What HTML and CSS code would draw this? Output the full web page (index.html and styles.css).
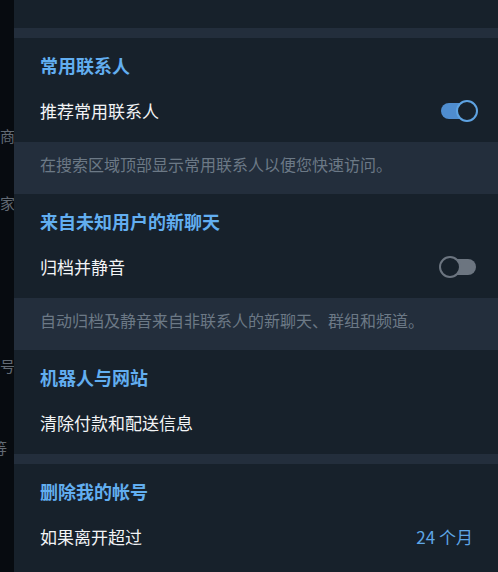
FILE: index.html
```html
<!DOCTYPE html>
<html lang="zh-CN">
<head>
<meta charset="utf-8">
<title>隐私设置</title>
<link rel="stylesheet" href="styles.css">
</head>
<body>
<div class="app">
  <div class="side">
    <div class="side-item s1"><span>协商</span></div>
    <div class="side-item s2"><span>大家</span></div>
    <div class="side-item s3"><span>帐号</span></div>
    <div class="side-item s4"><span>等等</span></div>
  </div>
  <main class="panel">
    <div class="top"></div>
    <div class="sep"></div>

    <section class="section">
      <div class="title">常用联系人</div>
      <div class="row">
        <span class="label">推荐常用联系人</span>
        <span class="toggle on"></span>
      </div>
    </section>
    <div class="info">在搜索区域顶部显示常用联系人以便您快速访问。</div>

    <section class="section">
      <div class="title">来自未知用户的新聊天</div>
      <div class="row">
        <span class="label">归档并静音</span>
        <span class="toggle off"></span>
      </div>
    </section>
    <div class="info">自动归档及静音来自非联系人的新聊天、群组和频道。</div>

    <section class="section">
      <div class="title">机器人与网站</div>
      <div class="row">
        <span class="label">清除付款和配送信息</span>
      </div>
    </section>
    <div class="sep"></div>

    <section class="section">
      <div class="title">删除我的帐号</div>
      <div class="row">
        <span class="label">如果离开超过</span>
        <span class="value">24 个月</span>
      </div>
    </section>
  </main>
</div>
</body>
</html>
```

FILE: styles.css
```css
html, body {
  margin: 0;
  padding: 0;
  height: 100%;
  background: #070b10;
  overflow: hidden;
}

body {
  font-family: "Noto Sans CJK SC", "Noto Sans", sans-serif;
  -webkit-font-smoothing: antialiased;
}

.app {
  display: flex;
  height: 572px;
}

.side {
  width: 14px;
  flex: 0 0 14px;
  overflow: hidden;
  background: #070b10;
  color: #626a74;
  font-size: 15px;
  line-height: 20px;
}

.side-item {
  display: flex;
  justify-content: flex-end;
  white-space: nowrap;
  height: 20px;
}

.side-item span {
  margin-right: -1px;
}

.s1 { margin-top: 126px; }
.s2 { margin-top: 47px; }
.s3 { margin-top: 143px; }
.s4 { margin-top: 62px; margin-right: 8px; }

.panel {
  flex: 1;
  background: #17212b;
  min-width: 0;
}

.top {
  height: 28px;
}

.sep {
  height: 10px;
  background: #232e3c;
}

.section {
  padding: 15px 20px 8px 26px;
}

.title {
  height: 24px;
  line-height: 24px;
  font-size: 18px;
  font-weight: 700;
  color: #62aef0;
}

.row {
  margin-top: 11px;
  height: 46px;
  display: flex;
  align-items: center;
  justify-content: space-between;
}

.label {
  font-size: 17px;
  line-height: 24px;
  color: #f2f4f6;
}

.value {
  font-size: 17px;
  line-height: 24px;
  color: #5ea6e6;
  margin-right: 5px;
}

.info {
  background: #232e3c;
  padding: 10px 20px 18px 26px;
  font-size: 16px;
  line-height: 24px;
  color: #6c7986;
  white-space: nowrap;
}

.toggle {
  position: relative;
  width: 37px;
  height: 22px;
  flex: 0 0 37px;
}

.toggle::before {
  content: "";
  position: absolute;
  top: 3px;
  height: 16px;
  border-radius: 8px;
}

.toggle::after {
  content: "";
  position: absolute;
  top: 0;
  width: 18px;
  height: 18px;
  border-radius: 50%;
  background: #17212b;
}

.toggle.on::before {
  left: 0;
  width: 30px;
  background: #4f8dcf;
}

.toggle.on::after {
  right: 0;
  border: 2px solid #5ea3e2;
}

.toggle.off {
  margin-right: 2px;
}

.toggle.off::before {
  right: 0;
  width: 30px;
  background: #6c7580;
}

.toggle.off::after {
  left: 0;
  border: 2px solid #6c7580;
}
```
